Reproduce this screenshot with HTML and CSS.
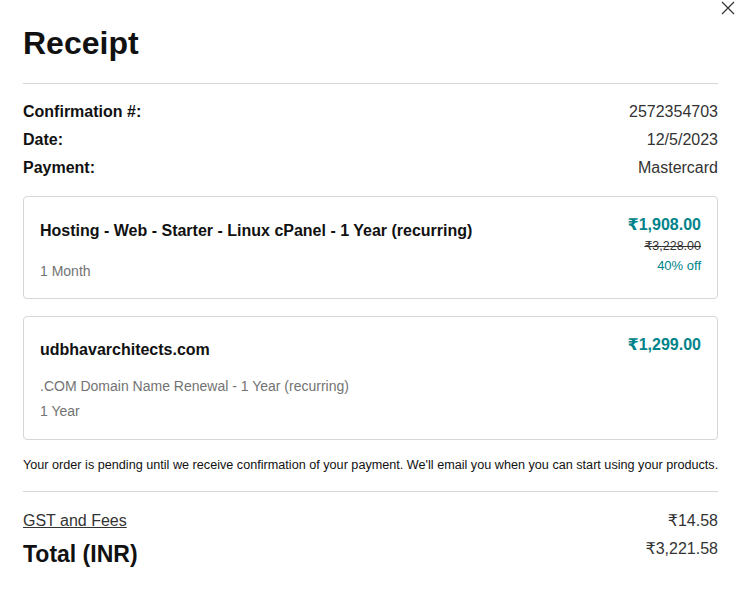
FILE: index.html
```html
<!DOCTYPE html>
<html>
<head>
<meta charset="utf-8">
<link rel="stylesheet" href="styles.css">
</head>
<body>
<div class="modal">
  <button class="close" aria-label="Close">
    <svg width="14" height="14" viewBox="0 0 14 14"><path d="M1 1L13 13M13 1L1 13" stroke="#333" stroke-width="1.2" fill="none"/></svg>
  </button>
  <h1 class="title">Receipt</h1>
  <hr class="rule">
  <div class="meta">
    <div class="meta-row"><span class="label">Confirmation #:</span><span class="value">2572354703</span></div>
    <div class="meta-row"><span class="label">Date:</span><span class="value">12/5/2023</span></div>
    <div class="meta-row"><span class="label">Payment:</span><span class="value">Mastercard</span></div>
  </div>
  <div class="card card-one">
    <div class="card-main">
      <div class="item-name">Hosting - Web - Starter - Linux cPanel - 1 Year (recurring)</div>
      <div class="item-sub sub-first">1 Month</div>
    </div>
    <div class="card-price">
      <div class="price">₹1,908.00</div>
      <div class="old-price">₹3,228.00</div>
      <div class="discount">40% off</div>
    </div>
  </div>
  <div class="card card-two">
    <div class="card-main">
      <div class="item-name">udbhavarchitects.com</div>
      <div class="item-sub sub-second">.COM Domain Name Renewal - 1 Year (recurring)</div>
      <div class="item-sub sub-third">1 Year</div>
    </div>
    <div class="card-price">
      <div class="price">₹1,299.00</div>
    </div>
  </div>
  <p class="note">Your order is pending until we receive confirmation of your payment. We'll email you when you can start using your products.</p>
  <hr class="rule rule-bottom">
  <div class="sum-row fees"><a class="fees-link">GST and Fees</a><span class="sum-value">₹14.58</span></div>
  <div class="sum-row total"><span class="total-label">Total (INR)</span><span class="sum-value">₹3,221.58</span></div>
</div>
</body>
</html>
```

FILE: styles.css
```css
* { box-sizing: border-box; }
html, body { margin: 0; padding: 0; background: #fff; }
body {
  font-family: "Liberation Sans", Arial, "DejaVu Sans", sans-serif;
  color: #111;
}
.modal {
  position: relative;
  width: 742px;
  padding: 0 24px 0 23px;
}
.close {
  position: absolute;
  top: 1px;
  right: 7px;
  border: 0;
  background: none;
  padding: 0;
  width: 14px;
  height: 14px;
  cursor: pointer;
}
.title {
  margin: 0;
  padding-top: 25px;
  font-size: 32px;
  line-height: 36px;
  font-weight: bold;
  color: #111;
}
.rule {
  border: 0;
  border-top: 1px solid #d6d6d6;
  margin: 22px 0 0;
}
.meta { padding-top: 14px; }
.meta-row {
  display: flex;
  justify-content: space-between;
  font-size: 16px;
  line-height: 28px;
}
.label { font-weight: bold; color: #111; }
.value { color: #333; }
.card {
  display: flex;
  justify-content: space-between;
  border: 1px solid #d6d6d6;
  border-radius: 4px;
  padding: 16px;
}
.card-one { margin-top: 14px; height: 103px; }
.card-two { margin-top: 17px; height: 124px; }
.card-main { display: flex; flex-direction: column; }
.item-name {
  font-size: 16px;
  line-height: 22px;
  font-weight: bold;
  color: #111;
}
.card-one .item-name { margin-top: 7px; }
.card-two .item-name { margin-top: 6px; }
.item-sub {
  font-size: 14px;
  line-height: 20px;
  color: #737373;
}
.sub-first { margin-top: 19px; }
.sub-second { margin-top: 15px; }
.sub-third { margin-top: 5px; }
.card-price { text-align: right; }
.price {
  color: #00838a;
  font-weight: bold;
  font-size: 16px;
  line-height: 22px;
  margin-top: 1px;
}
.card-two .price { margin-top: 1px; }
.old-price {
  font-size: 12.5px;
  line-height: 20px;
  color: #333;
  text-decoration: line-through;
}
.discount {
  font-size: 13px;
  line-height: 20px;
  color: #00838a;
}
.note {
  margin: 17px 0 0;
  font-size: 12.65px;
  line-height: 16px;
  color: #111;
  white-space: nowrap;
}
.rule-bottom { margin-top: 18px; }
.sum-row {
  display: flex;
  justify-content: space-between;
  align-items: flex-start;
}
.fees { margin-top: 18px; font-size: 16px; line-height: 22px; }
.fees-link { color: #333; text-decoration: underline; }
.sum-value { color: #333; font-size: 16px; line-height: 22px; }
.total { margin-top: 7px; }
.total-label {
  font-size: 23px;
  line-height: 30px;
  font-weight: bold;
  color: #111;
}
.total .sum-value { line-height: 22px; margin-top: -1px; }
```
